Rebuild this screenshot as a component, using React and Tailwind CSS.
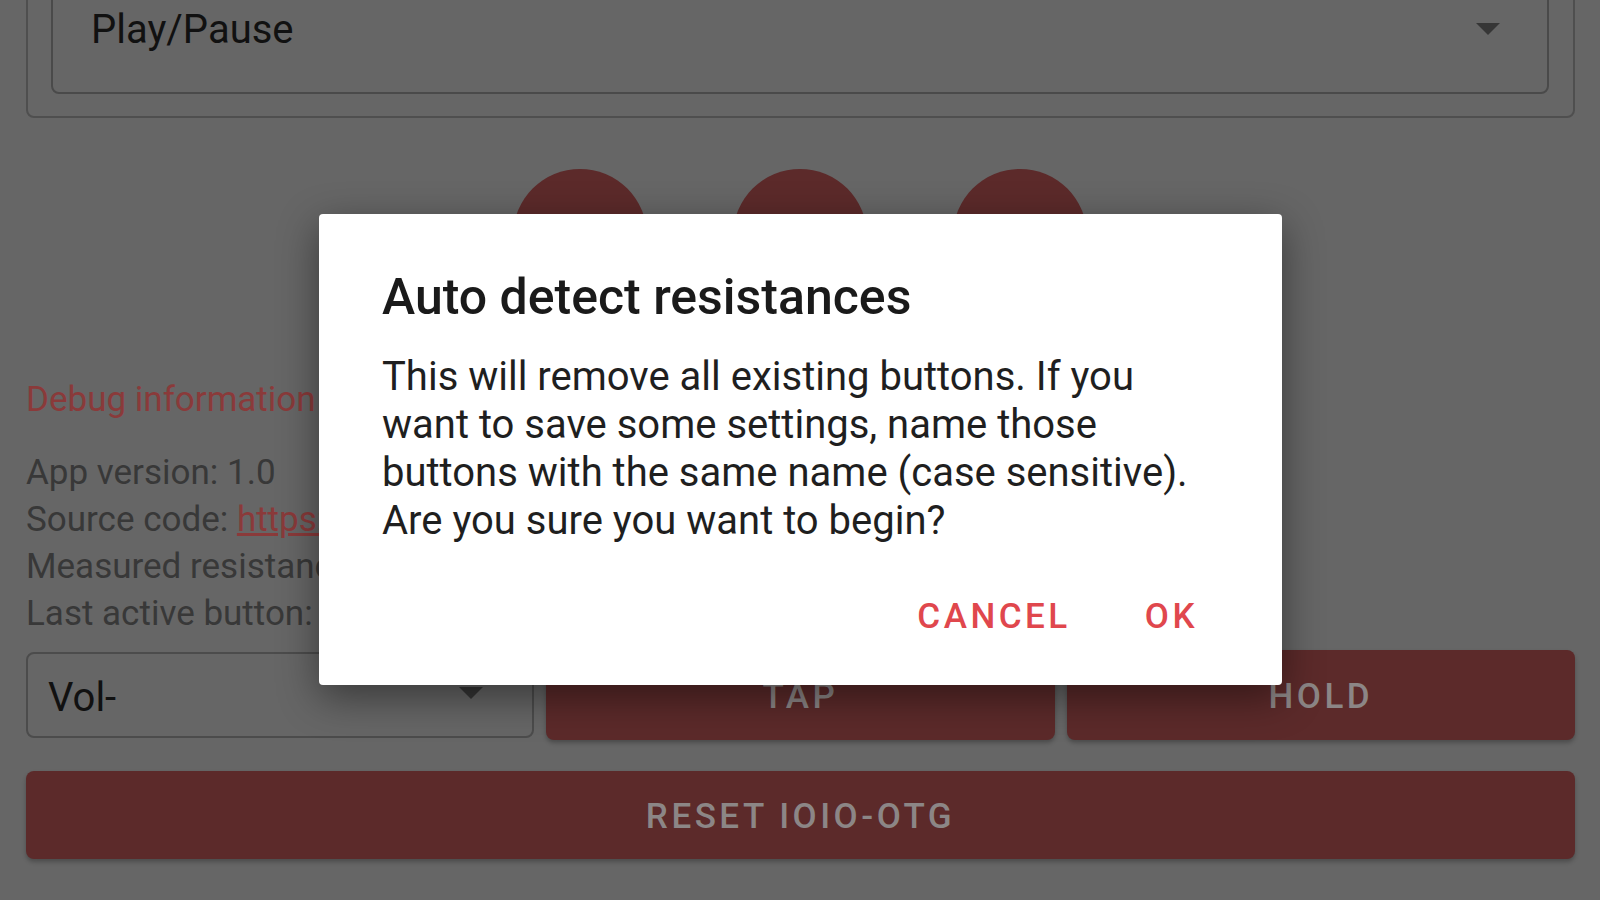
import React from "react";

function Arrow({ className }) {
  return (
    <svg className={className} width="26" height="14" viewBox="0 0 26 14">
      <path d="M1 1 L25 1 L13 13 Z" fill="#363636" />
    </svg>
  );
}

export default function App() {
  return (
    <div className="relative w-[1600px] h-[900px] overflow-hidden bg-[#666666] font-['Roboto','Liberation_Sans',sans-serif]">
      <div className="flex flex-col px-[26px] pr-[25px]">
        {/* top card with select */}
        <div className="-mt-[60px] rounded-[8px] border-2 border-[#4f4f4f] pl-[23px] pr-[24px] pb-[22px] pt-[20px]">
          <div className="flex h-[132px] items-end justify-between rounded-[8px] border-2 border-[#4a4a4a] pl-[38px] pr-[46px] pb-[32px]">
            <span className="text-[40px] leading-[60px] text-[#111]">Play/Pause</span>
            <Arrow className="mb-[24px]" />
          </div>
        </div>

        {/* round buttons */}
        <div className="mt-[51px] flex justify-center gap-[86px] pr-[2px]">
          <div className="h-[134px] w-[134px] rounded-full bg-[#5c2a2a]" />
          <div className="h-[134px] w-[134px] rounded-full bg-[#5c2a2a]" />
          <div className="h-[134px] w-[134px] rounded-full bg-[#5c2a2a]" />
        </div>

        {/* debug information */}
        <div className="mt-[73px] flex flex-col text-[35px] leading-[47px]">
          <div className="text-[#8a3a3a]">Debug information</div>
          <div className="mt-[26px] text-[#383838]">App version: 1.0</div>
          <div className="text-[#383838]">
            Source code: <span className="text-[#8a3a3a] underline">https://github.com/</span>
          </div>
          <div className="text-[#383838]">Measured resistance: 0 Ω</div>
          <div className="text-[#383838]">Last active button: Vol-</div>
        </div>

        {/* button row */}
        <div className="mt-[13px] grid grid-cols-3 gap-[12px]">
          <div className="mt-[2px] flex h-[86px] items-center justify-between rounded-[8px] border-2 border-[#4c4c4c] pl-[20px] pr-[48px] pt-[5px]">
            <span className="text-[40px] text-[#111]">Vol-</span>
            <Arrow className="-mt-[10px]" />
          </div>
          <div className="flex h-[90px] items-center justify-center rounded-[8px] bg-[#5c2a2a] pt-[5px] shadow-[0_3px_4px_rgba(0,0,0,0.25)]">
            <span className="text-[35px] font-medium tracking-[0.1em] text-[#8c8686]">TAP</span>
          </div>
          <div className="flex h-[90px] items-center justify-center rounded-[8px] bg-[#5c2a2a] pt-[5px] shadow-[0_3px_4px_rgba(0,0,0,0.25)]">
            <span className="text-[35px] font-medium tracking-[0.1em] text-[#8c8686]">HOLD</span>
          </div>
        </div>

        <div className="mt-[31px] flex h-[88px] items-center justify-center rounded-[8px] bg-[#5c2a2a] pt-[5px] shadow-[0_3px_4px_rgba(0,0,0,0.25)]">
          <span className="text-[35px] font-medium tracking-[0.1em] text-[#8c8686]">RESET IOIO-OTG</span>
        </div>
      </div>

      {/* dialog */}
      <div className="absolute left-[319px] top-[214px] flex h-[471px] w-[963px] flex-col rounded-[4px] bg-white pl-[63px] pt-[54px] shadow-[0_12px_40px_rgba(0,0,0,0.45)]">
        <div className="text-[50px] font-medium leading-[58px] text-[#1a1a1a]">Auto detect resistances</div>
        <div className="mt-[27px] w-[860px] text-[40px] leading-[48px] text-[#1f1f1f]">
          This will remove all existing buttons. If you
          <br />
          want to save some settings, name those
          <br />
          buttons with the same name (case sensitive).
          <br />
          Are you sure you want to begin?
        </div>
        <div className="mt-[40px] flex justify-end gap-[42px] pr-[68px]">
          <span className="px-[16px] text-[35px] font-medium leading-[64px] tracking-[0.1em] text-[#e0474d]">CANCEL</span>
          <span className="px-[16px] text-[35px] font-medium leading-[64px] tracking-[0.1em] text-[#e0474d]">OK</span>
        </div>
      </div>
    </div>
  );
}
